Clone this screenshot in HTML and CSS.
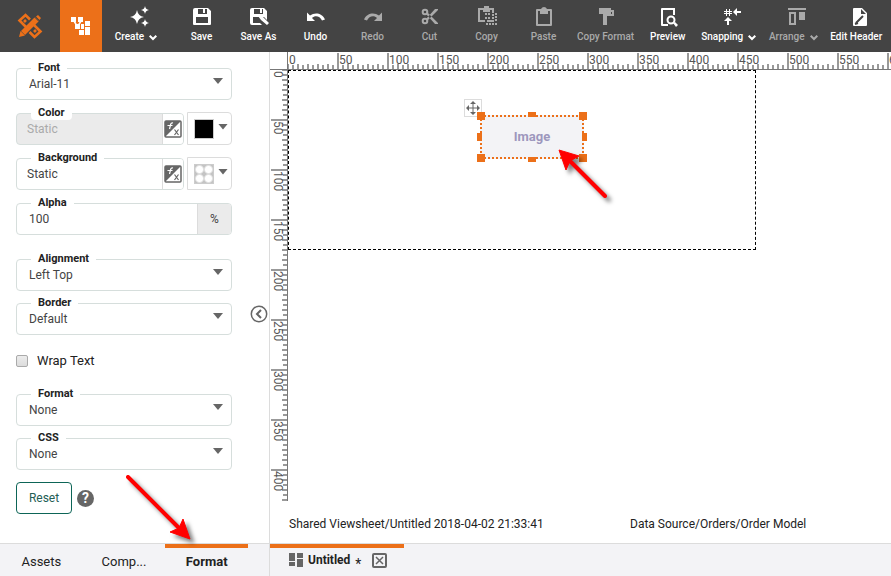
FILE: index.html
```html
<!DOCTYPE html>
<html lang="en">
<head>
<meta charset="utf-8">
<title>Untitled</title>
<link rel="stylesheet" href="styles.css">
</head>
<body>
<header class="toolbar">
  <a class="logo" href="#" aria-label="Home">
    <svg width="26" height="26" viewBox="0 0 26 26" fill="none" stroke="#ec7019">
      <path d="M9 14 2.500 7.500 8.500 2 13 6.500M7 9l2-2M17 12l6.500 6.500-6 5.500-5-5M19 17l-2 2" stroke-width="2.600"/>
      <path d="M6 20 20 6" stroke-width="5.600"/>
      <path d="M2 24l1.500-6 4.500 4.500zM19 3.500l2-1.500 3 3-1.500 2z" fill="#ec7019" stroke="none"/>
      <path d="m17.500 4 4.500 4.500" stroke="#444" stroke-width="1"/>
    </svg>
  </a>
  <button class="mode" aria-label="Composer">
    <svg width="20" height="18" viewBox="0 0 20 18" fill="#fff">
      <path d="M0 0h5v5H0zM7 0h5v5H7zM4 7h5v5H4zM14 4h5v5h-5zM8 13h5v5H8zM14 10h5v8h-5zM10 7h3v5h-3z"/>
      <path d="M3 4l3 5M10 4 7 9" stroke="#fff" stroke-width="1.500"/>
    </svg>
  </button>
  <nav class="tools">
    <button class="tool wide">
      <svg class="icon" viewBox="0 0 24 24"><path d="M9 5q1 6 7 7-6 1-7 7-1-6-7-7 6-1 7-7zM17 1q.5 3.500 4 4-3.500.5-4 4-.5-3.500-4-4 3.500-.5 4-4zM17 14q.5 3 4 4-3.500.5-4 4-.5-3.500-4-4 3.500-.5 4-4z"/></svg>
      <span>Create <svg class="chev" viewBox="0 0 8 5"><path d="m.7.7 3.300 3.300L7.300.7"/></svg></span>
    </button>
    <button class="tool">
      <svg class="icon" viewBox="0 0 24 24"><path fill-rule="evenodd" d="M5 3h13l3 3v13q0 1-1 1H4q-1 0-1-1V5q0-2 2-2zM8 4v5h9V4zM6 12v6h12v-6z"/><path d="M13 4h2v4h-2z"/></svg>
      <span>Save</span>
    </button>
    <button class="tool">
      <svg class="icon" viewBox="0 0 24 24"><path fill-rule="evenodd" d="M5 3h12l3 3v9l-3-3H6v6h7l2 2H5q-2 0-2-2V5q0-2 2-2zM7 4v5h9V4z"/><path d="M13 4h2v4h-2zM11 11l5 1 6 6-2 2-6-5z"/></svg>
      <span>Save As</span>
    </button>
    <button class="tool">
      <svg class="icon" viewBox="0 0 24 24"><path d="M3 7.500V16h8l-3-3c3-3 8-2 10 2.500l3-1C18 8 11 7 6 10.500z"/></svg>
      <span>Undo</span>
    </button>
    <button class="tool" disabled>
      <svg class="icon" viewBox="0 0 24 24"><path d="M21 7.500V16h-8l3-3c-3-3-8-2-10 2.500l-3-1C6 8 13 7 18 10.500z"/></svg>
      <span>Redo</span>
    </button>
    <button class="tool" disabled>
      <svg class="icon" viewBox="0 0 24 24"><g fill="none" stroke="currentColor" stroke-width="2"><circle cx="7" cy="7" r="2.300"/><circle cx="7" cy="16" r="2.300"/></g><path d="M8 9l2-1 10 10v1h-3zM8 14l2 1L20 5V4h-3z"/></svg>
      <span>Cut</span>
    </button>
    <button class="tool" disabled>
      <svg class="icon" viewBox="0 0 24 24"><path d="M9 3V1h5v2h5v5h-2V5h-2v2H8V5H5v10h5v2H3V3z"/><path d="M10 8h2v2h-2zM13 8h2v2h-2zM10 12h2v2h-2zM13 12h2v2h-2zM17 9h2v2h-2zM17 12h2v2h-2zM12 15h7v2h-7zM20 8h2v2h-2zM20 11h2v2h-2zM20 14h2v2h-2zM20 18h2v2h-2zM17 18h2v2h-2zM14 18h2v2h-2zM11 18h2v2h-2z"/></svg>
      <span>Copy</span>
    </button>
    <button class="tool" disabled>
      <svg class="icon" viewBox="0 0 24 24"><path fill-rule="evenodd" d="M9 4q1-2 3-2t3 2h4q1 0 1 1v15q0 1-1 1H5q-1 0-1-1V5q0-1 1-1zM8 6H6v13h12V6h-2v3H8z"/></svg>
      <span>Paste</span>
    </button>
    <button class="tool" disabled>
      <svg class="icon" viewBox="0 0 24 24"><path d="M5 3h12v2h3v6h-7v9H9V9h9V7h-1v2H5z"/></svg>
      <span>Copy Format</span>
    </button>
    <button class="tool">
      <svg class="icon" viewBox="0 0 24 24"><path d="M6 3h13v7h-2V5H7v14h5v2H6q-1 0-1-1V4q0-1 1-1z"/><circle cx="15" cy="15" r="3.500" fill="none" stroke="currentColor" stroke-width="2"/><path d="m17 18 2-1 3 3-2 2z"/></svg>
      <span>Preview</span>
    </button>
    <button class="tool wide">
      <svg class="icon" viewBox="0 0 24 24"><path d="M5.500 4v7M8.500 4v7M3 6.500h8M3 8.500h8" stroke="currentColor" stroke-width="1"/><path d="m12 7 4-4v3h4v2h-4v3zM7 12l4 4H8v4H6v-4H3z"/></svg>
      <span>Snapping <svg class="chev" viewBox="0 0 8 5"><path d="m.7.7 3.300 3.300L7.300.7"/></svg></span>
    </button>
    <button class="tool wide" disabled>
      <svg class="icon" viewBox="0 0 24 24"><path d="M3 3h18v2H3zM14 7h6v8h-6z"/><path d="M5 8h5v11H5z" fill="none" stroke="currentColor" stroke-width="2"/></svg>
      <span>Arrange <svg class="chev" viewBox="0 0 8 5"><path d="m.7.7 3.300 3.300L7.300.7"/></svg></span>
    </button>
    <button class="tool">
      <svg class="icon shift" viewBox="0 0 24 24"><path fill-rule="evenodd" d="M6 3h8l5 5v12q0 1-1 1H6q-1 0-1-1V4q0-1 1-1zM13 4v5h5z"/><path d="m8 18 7-7M7 19l3-1" stroke="#444" stroke-width="2"/></svg>
      <span>Edit Header</span>
    </button>
  </nav>
</header>

<main class="workspace">
  <aside class="panel">
    <form class="format">
      <div class="field drop"><label for="font">Font</label>
        <select id="font"><option>Arial-11</option></select></div>
      <div class="pair">
        <div class="field group off"><label for="color">Color</label>
          <input id="color" value="Static" disabled>
          <button type="button" class="fx" aria-label="Color expression"><svg width="18" height="18" viewBox="0 0 18 18"><use href="#fx"/></svg></button></div>
        <button type="button" class="picker" aria-label="Pick color"><i class="swatch black"></i></button>
      </div>
      <div class="pair">
        <div class="field group"><label for="bg">Background</label>
          <input id="bg" value="Static">
          <button type="button" class="fx" aria-label="Background expression"><svg width="18" height="18" viewBox="0 0 18 18"><use href="#fx"/></svg></button></div>
        <button type="button" class="picker" aria-label="Pick background"><i class="swatch clear"></i></button>
      </div>
      <div class="field group alpha"><label for="alpha">Alpha</label>
        <input id="alpha" value="100"><span class="unit">%</span></div>
      <div class="field drop apart"><label for="align">Alignment</label>
        <select id="align"><option>Left Top</option></select></div>
      <div class="field drop"><label for="border">Border</label>
        <select id="border"><option>Default</option></select></div>
      <label class="check"><input type="checkbox">Wrap Text</label>
      <div class="field drop"><label for="fmt">Format</label>
        <select id="fmt"><option>None</option></select></div>
      <div class="field drop"><label for="css">CSS</label>
        <select id="css"><option>None</option></select></div>
      <div class="actions">
        <button type="button" class="reset">Reset</button>
        <button type="button" class="help" aria-label="Help">?</button>
      </div>
    </form>
    <button class="collapse" aria-label="Collapse panel">
      <svg width="18" height="18" viewBox="0 0 18 18" fill="none" stroke="#666"><circle cx="9" cy="9" r="7.700" stroke-width="1.500"/><path d="M11 5 7 9l4 4" stroke-width="2"/></svg>
    </button>
  </aside>

  <section class="editor">
    <div class="corner"></div>
    <div class="ruler across"><span>0</span><span>50</span><span>100</span><span>150</span><span>200</span><span>250</span><span>300</span><span>350</span><span>400</span><span>450</span><span>500</span><span>550</span><span>600</span></div>
    <div class="ruler down"><span>0</span><span>50</span><span>100</span><span>150</span><span>200</span><span>250</span><span>300</span><span>350</span><span>400</span></div>
    <div class="canvas">
      <div class="sheet">
        <div class="move"><svg width="16" height="16" viewBox="0 0 16 16"><path d="M8 2v12M2 8h12" stroke="#666"/><path d="m8 1 3 3H5zM8 15l3-3H5zM1 8l3-3v6zM15 8l-3-3v6z" fill="#666"/></svg></div>
        <div class="object">Image
          <i class="h nw"></i><i class="h n"></i><i class="h ne"></i><i class="h w"></i><i class="h e"></i><i class="h sw"></i><i class="h s"></i><i class="h se"></i>
        </div>
        <svg class="arrow to-object" width="64" height="64" viewBox="0 0 64 64"><g class="shade"><path d="M50 50 14 14" stroke-width="4" stroke-linecap="round"/><path d="m4 4 20 6-9 5-4 9z"/></g></svg>
      </div>
    </div>
    <footer class="status"><span>Shared Viewsheet/Untitled 2018-04-02 21:33:41</span><span>Data Source/Orders/Order Model</span></footer>
  </section>

  <nav class="tabs side">
    <a href="#">Assets</a><a href="#">Comp...</a><a href="#" class="active">Format</a>
    <svg class="arrow to-tab" width="84" height="84" viewBox="0 0 84 84"><g class="shade"><path d="m8 8 54 54" stroke-width="4" stroke-linecap="round"/><path d="m70 70-20-7 9-4 4-9z"/></g></svg>
  </nav>
  <nav class="tabs docs">
    <div class="doc active">
      <svg width="14" height="14" viewBox="0 0 14 14" fill="#666"><path d="M0 0h6v8H0zM0 9h6v4H0zM8 0h6v5H8zM8 6h6v8H8z"/></svg>
      <a href="#">Untitled</a><span class="star">*</span>
      <button class="close" aria-label="Close"><svg width="15" height="15" viewBox="0 0 15 15" fill="none" stroke="#666" stroke-width="2"><rect x="1" y="1" width="13" height="13" rx="1"/><path d="m4 4 7 7M11 4l-7 7" stroke-width="1.500"/></svg></button>
    </div>
  </nav>
</main>

<svg width="0" height="0" class="defs">
  <symbol id="fx" viewBox="0 0 18 18">
    <rect x="1" y="1" width="16" height="16" rx="1" fill="#fff" stroke="#666" stroke-width="1.500"/>
    <path d="M1 1h16L1 17z" fill="#666"/>
    <path d="M9 3Q7 2.500 6.500 5L5.500 9M3.500 5.500h5" fill="none" stroke="#fff" stroke-width="1.200"/>
    <path d="m10.500 9.500 4 5.500M14.500 9.500l-4 5.500" fill="none" stroke="#666" stroke-width="1.200"/>
  </symbol>
</svg>
</body>
</html>
```
FILE: styles.css
```css
:root {
  --accent: #ec7019;
  --line: #dcdcdc;
  --field: #d6dedc;
  --ink: #222;
  --tab: #f3f3f6;
}
* { box-sizing: border-box; }
body {
  margin: 0;
  height: 100vh;
  overflow: hidden;
  display: flex;
  flex-direction: column;
  background: #fff;
  color: var(--ink);
  font: 12px/16px Roboto, "Liberation Sans", sans-serif;
}
button, input, select { font: inherit; color: inherit; }
button { margin: 0; padding: 0; border: 0; background: none; cursor: pointer; }
a { color: inherit; text-decoration: none; }
svg { display: block; }
.defs { position: absolute; }

.toolbar { display: flex; flex: none; height: 52px; background: #444; overflow: hidden; }
.logo { flex: none; width: 60px; display: grid; place-items: center; }
.mode { flex: none; width: 42px; display: grid; place-items: center; background: var(--accent); }
.tools { display: flex; padding-left: 2px; }
.tool {
  flex: none;
  min-width: 57px;
  padding: 5px 5px 0;
  display: flex;
  flex-direction: column;
  align-items: center;
  gap: 2px;
  color: #fff;
  font-size: 10px;
  font-weight: 500;
  line-height: 12px;
  white-space: nowrap;
}
.tool.wide { min-width: 64px; }
.tool:first-child { margin-right: 5px; }
.tool:disabled { color: #aaa; }
.tool .icon { width: 24px; height: 24px; fill: currentColor; }
.tool.wide .icon { margin-left: 8px; }
.tool .shift { margin-left: 8px; }
.tool span { display: flex; align-items: center; gap: 5px; }
.chev { width: 8px; height: 5px; fill: none; stroke: currentColor; stroke-width: 2; overflow: visible; }

.workspace {
  flex: 1;
  min-height: 0;
  display: grid;
  grid-template-columns: 270px minmax(0, 1fr);
  grid-template-rows: minmax(0, 1fr) 33px;
}
.panel { position: relative; border-right: 1px solid var(--line); }
.format { width: 232px; padding: 16px 0 0 16px; display: flex; flex-direction: column; gap: 12px; }
.field { position: relative; height: 32px; flex: none; display: flex; border: 1px solid var(--field); border-radius: 4px; background: #fff; }
.field > label {
  position: absolute;
  top: -8px;
  left: 14px;
  padding: 0 7px;
  background: #fff;
  font-size: 11px;
  line-height: 14px;
  font-weight: 700;
}
.field select, .field input {
  flex: 1;
  width: 0;
  min-width: 0;
  padding: 0 12px;
  border: 0;
  outline: 0;
  appearance: none;
  background: none;
  color: #444;
}
.field.drop::after, .picker::after {
  content: "";
  width: 10px;
  height: 6px;
  background: #666;
  clip-path: polygon(0 0, 100% 0, 50% 100%);
}
.field.drop::after { position: absolute; right: 8px; top: 9px; pointer-events: none; }
.pair { display: flex; gap: 3px; height: 33px; }
.pair .field { flex: 1; margin-top: 1px; }
.pair .field input { padding: 0 10px; }
.field.off { background: #ebebeb; }
.field.off > label { border-radius: 0 0 4px 4px; }
.field.off input { color: #aaa; }
.fx { flex: none; width: 21px; display: grid; place-items: center; border-left: 1px solid var(--line); background: #fff; border-radius: 0 3px 3px 0; }
.picker { flex: none; width: 45px; display: flex; align-items: center; gap: 4px; padding-left: 6px; border: 1px solid var(--line); border-radius: 0 4px 4px 0; }
.picker::after { margin-bottom: 4px; }
.swatch { width: 20px; height: 20px; border: 1px solid #ccc; }
.black { background: #000; }
.clear { background: radial-gradient(circle, #fff 3px, #c4c4c4 5px) 0 0 / 9px 9px; }
.unit { width: 34px; display: grid; place-items: center; border-left: 1px solid var(--line); background: #ebebeb; color: #444; border-radius: 0 3px 3px 0; }
.alpha { margin-top: 1px; }
.apart { margin-top: 12px; }
.check { height: 20px; margin: 3px 0 12px; padding-top: 2px; display: flex; align-items: center; gap: 9px; font-size: 13px; }
.check input { appearance: none; width: 12px; height: 12px; margin: 0; border: 1px solid #aaa; border-radius: 2px; background: linear-gradient(#ececec, #dcdcdc); }
.actions { display: flex; align-items: center; gap: 5px; }
.reset { width: 56px; height: 32px; border: 1px solid #0d6557; border-radius: 4px; color: #245e55; }
.help { width: 17px; height: 17px; border-radius: 50%; background: #666; color: #fff; font-size: 14px; font-weight: 700; line-height: 17px; }
.collapse { position: absolute; right: 1px; top: 253px; }

.editor {
  min-width: 0;
  display: grid;
  grid-template-columns: 17px minmax(0, 1fr);
  grid-template-rows: 17px minmax(0, 1fr) 40px;
  overflow: hidden;
}
.ruler { display: flex; overflow: hidden; color: #555; --t: #999; }
.ruler span { flex: none; line-height: 16px; }
.across {
  height: 18px;
  border-bottom: 1px solid #777;
  background:
    repeating-linear-gradient(90deg, var(--t) 0 2px, transparent 2px 10px) 0 100% / 100% 5px no-repeat,
    repeating-linear-gradient(90deg, var(--t) 0 2px, transparent 2px 5px) 0 100% / 100% 4px no-repeat;
}
.across span { width: 50px; margin-top: 1px; border-left: 2px solid var(--t); line-height: 14px; }
.across span:first-child { border-left: 1px solid #777; padding-left: 1px; margin-top: 0; line-height: 16px; }
.down {
  width: 18px;
  height: 432px;
  flex-direction: column;
  border-right: 1px solid #777;
  background:
    repeating-linear-gradient(180deg, var(--t) 0 2px, transparent 2px 10px) 100% 0 / 5px 100% no-repeat,
    repeating-linear-gradient(180deg, var(--t) 0 2px, transparent 2px 5px) 100% 0 / 4px 100% no-repeat;
}
.down span { height: 50px; margin-left: 1px; writing-mode: vertical-rl; border-top: 2px solid var(--t); line-height: 18px; }
.down span:first-child { border-color: #777; border-top-width: 1px; margin-left: 0; padding-top: 1px; }
.canvas { padding: 1px 0 0 1px; }
.sheet { position: relative; width: 468px; height: 180px; border: 1px dashed #000; }
.move { position: absolute; left: 175px; top: 28px; width: 18px; height: 18px; border: 1px solid var(--line); }
.object {
  position: absolute;
  left: 191px;
  top: 44px;
  width: 104px;
  height: 44px;
  display: grid;
  place-items: center;
  color: #9d97bd;
  font-size: 13px;
  font-weight: 700;
  --dx: repeating-linear-gradient(90deg, var(--accent) 0 2px, transparent 2px 4px);
  --dy: repeating-linear-gradient(180deg, var(--accent) 0 2px, transparent 2px 4px);
  background:
    var(--dx) 0 0 / 100% 2px no-repeat,
    var(--dx) 0 100% / 100% 2px no-repeat,
    var(--dy) 0 0 / 2px 100% no-repeat,
    var(--dy) 100% 0 / 2px 100% no-repeat,
    var(--tab);
}
.h { position: absolute; width: 8px; height: 8px; background: var(--accent); }
.nw, .n, .ne { top: -3px; }
.sw, .s, .se { bottom: -3px; }
.nw, .w, .sw { left: -3px; }
.ne, .e, .se { right: -3px; }
.n, .s { left: 48px; height: 5px; }
.w, .e { top: 18px; width: 5px; }
.arrow { position: absolute; pointer-events: none; overflow: visible; }
.arrow .shade { fill: #f00; stroke: #f00; filter: drop-shadow(4px 4px 2px rgba(0, 0, 0, .5)); }
.to-object { left: 266px; top: 75px; }
.status { grid-column: 1 / -1; padding: 13px 0 0 19px; display: grid; grid-template-columns: 341px 1fr; white-space: nowrap; }

.tabs { position: relative; border-top: 1px solid var(--line); background: var(--tab); display: flex; font-size: 13px; }
.side { border-right: 1px solid var(--line); padding-right: 21px; }
.side a { flex: 1; padding-top: 6px; border-top: 4px solid transparent; text-align: center; line-height: 16px; }
.side a.active, .doc.active { border-top: 4px solid var(--accent); font-weight: 700; }
.to-tab { left: 120px; top: -75px; }
.doc { width: 134px; padding: 0 17px 4px 19px; display: flex; align-items: center; gap: 5px; font-size: 12px; }
.star { align-self: flex-end; font-weight: 400; font-size: 14px; }
.close { margin-left: auto; }
```
